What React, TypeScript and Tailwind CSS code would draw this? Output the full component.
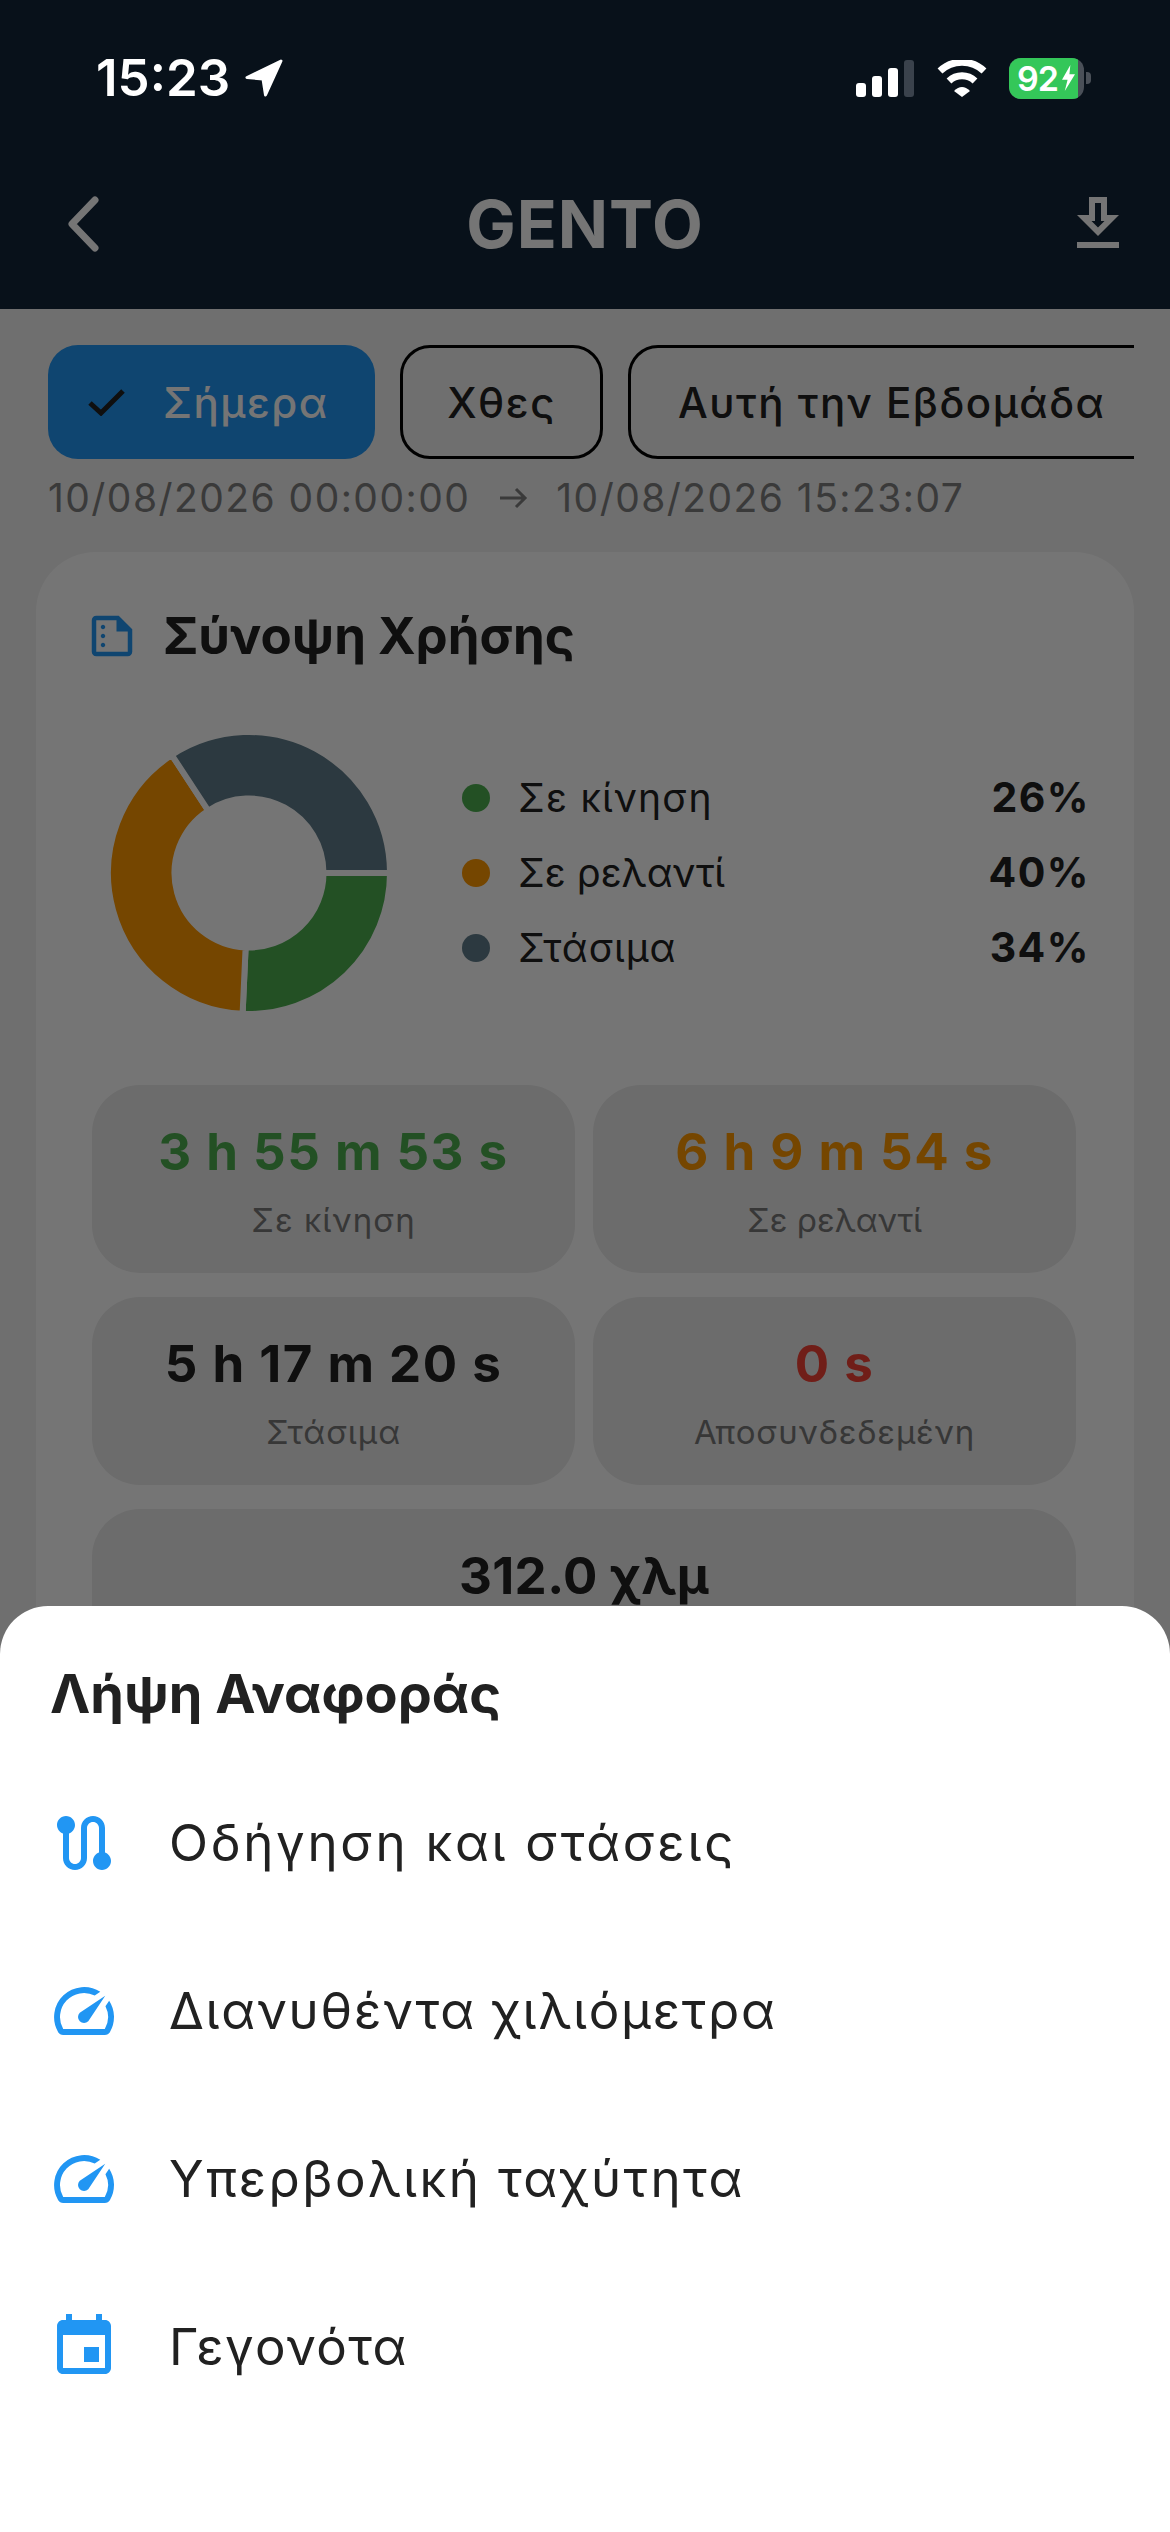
const ring = (from: number, to: number) => {
  const cx = 144
  const cy = 144
  const outer = 141
  const inner = 74.5
  const p = (r: number, a: number) => {
    const t = (a * Math.PI) / 180
    return `${(cx + r * Math.cos(t)).toFixed(2)} ${(cy + r * Math.sin(t)).toFixed(2)}`
  }
  const large = to - from > 180 ? 1 : 0
  return `M${p(outer, from)} A${outer} ${outer} 0 ${large} 1 ${p(outer, to)} L${p(inner, to)} A${inner} ${inner} 0 ${large} 0 ${p(inner, from)} Z`
}

const speedIcon = (
  <svg viewBox="0 0 24 24" className="w-[72px] h-[72px] shrink-0 fill-[#2196f3]">
    <path d="m20.38 8.57-1.23 1.85a8 8 0 0 1-.22 7.58H5.07A8 8 0 0 1 15.58 6.85l1.85-1.23A10 10 0 0 0 3.35 19a2 2 0 0 0 1.72 1h13.85a2 2 0 0 0 1.74-1 10 10 0 0 0-.27-10.44z" />
    <path d="M10.59 15.41a2 2 0 0 0 2.83 0l5.66-8.49-8.49 5.66a2 2 0 0 0 0 2.83z" />
  </svg>
)

const routeIcon = (
  <svg viewBox="0 0 24 24" className="w-[72px] h-[72px] shrink-0 fill-[#2196f3]">
    <path d="M19 15.18V7c0-2.21-1.79-4-4-4s-4 1.79-4 4v10c0 1.1-.9 2-2 2s-2-.9-2-2V8.82C8.16 8.4 9 7.3 9 6c0-1.66-1.34-3-3-3S3 4.34 3 6c0 1.3.84 2.4 2 2.82V17c0 2.21 1.79 4 4 4s4-1.79 4-4V7c0-1.1.9-2 2-2s2 .9 2 2v8.18c-1.16.41-2 1.51-2 2.82 0 1.66 1.34 3 3 3s3-1.34 3-3c0-1.3-.84-2.4-2-2.82z" />
  </svg>
)

const eventIcon = (
  <svg viewBox="0 0 24 24" className="w-[72px] h-[72px] shrink-0 fill-[#2196f3]">
    <path d="M17 12h-5v5h5v-5zM16 1v2H8V1H6v2H5c-1.11 0-1.99.9-1.99 2L3 19c0 1.1.89 2 2 2h14c1.1 0 2-.9 2-2V5c0-1.1-.9-2-2-2h-1V1h-2zm3 18H5V8h14v11z" />
  </svg>
)

const legend = [
  { label: 'Σε κίνηση', value: '26%', dot: 'bg-[#4caf50]', track: 'tracking-[1.2px]' },
  { label: 'Σε ρελαντί', value: '40%', dot: 'bg-[#ff9800]', track: 'tracking-[0px]' },
  { label: 'Στάσιμα', value: '34%', dot: 'bg-[#607d8b]', track: 'tracking-[1px]' },
]

const stats = [
  { value: '3 h 55 m 53 s', label: 'Σε κίνηση', color: 'text-[#4caf50]', track: 'tracking-[1px]' },
  { value: '6 h 9 m 54 s', label: 'Σε ρελαντί', color: 'text-[#ff9800]', track: 'tracking-[0px]' },
  { value: '5 h 17 m 20 s', label: 'Στάσιμα', color: 'text-[#212121]', track: 'tracking-[1px]' },
  { value: '0 s', label: 'Αποσυνδεδεμένη', color: 'text-[#f44336]', track: 'tracking-[0.8px]' },
]

const reports = [
  { label: 'Οδήγηση και στάσεις', icon: routeIcon, track: 'tracking-[2.7px]' },
  { label: 'Διανυθέντα χιλιόμετρα', icon: speedIcon, track: 'tracking-[1.75px]' },
  { label: 'Υπερβολική ταχύτητα', icon: speedIcon, track: 'tracking-[2.4px]' },
  { label: 'Γεγονότα', icon: eventIcon, track: 'tracking-[1.4px]' },
]

function StatusBar() {
  return (
    <div className="relative z-20 h-[156px] flex items-center justify-between pl-[96px] pr-[79px] text-white">
      <div className="flex items-center gap-[15px]">
        <span className="text-[51px] leading-[60px] font-semibold">15:23</span>
        <svg viewBox="0 0 38 38" className="w-[38px] h-[38px] fill-white stroke-white stroke-[3px]" strokeLinejoin="round">
          <path d="M36 2 L2 18.5 L18 20 L20.5 36 Z" />
        </svg>
      </div>
      <div className="flex items-center">
        <div className="flex items-end gap-[6px] h-[37px]">
          <div className="w-[10px] h-[14px] rounded-[3px] bg-white" />
          <div className="w-[10px] h-[21px] rounded-[3px] bg-white" />
          <div className="w-[10px] h-[29px] rounded-[3px] bg-white" />
          <div className="w-[10px] h-[37px] rounded-[3px] bg-[#3a424c]" />
        </div>
        <svg viewBox="0 0 50 37" className="w-[50px] h-[37px] ml-[23px] fill-none stroke-white stroke-[7px]">
          <path d="M3 11 A32 32 0 0 1 47 11" />
          <path d="M12 21 A19 19 0 0 1 38 21" />
          <path d="M17 31 Q25 23 33 31 L25 37 Z" className="fill-white stroke-none" />
        </svg>
        <div className="ml-[22px] w-[75px] h-[41px] rounded-[12px] overflow-hidden flex bg-[#4a5058]">
          <div className="w-[69px] h-full bg-[#34c759] flex items-center pl-[8px] gap-[4px]">
            <span className="text-[34px] leading-[41px] font-semibold tracking-[-1px]">92</span>
            <svg viewBox="0 0 14 28" className="w-[13px] h-[26px] fill-white shrink-0">
              <path d="M9 0 L0 16 H6 L3 28 L14 10 H8 Z" />
            </svg>
          </div>
        </div>
        <div className="ml-[2px] w-[5px] h-[12px] rounded-r-[4px] bg-[#4a5058]" />
      </div>
    </div>
  )
}

export default function App() {
  return (
    <div className="relative w-[1170px] h-[2532px] overflow-hidden bg-[#f2f2f2] font-['Inter','Noto_Sans',sans-serif]">
      <header className="bg-[#122539] pb-[17px]">
        <StatusBar />
        <div className="h-[136px] flex items-center justify-between px-[36px]">
          <svg viewBox="0 0 72 72" className="w-[72px] h-[72px] fill-none stroke-white stroke-[7px]" strokeLinecap="round" strokeLinejoin="round">
            <path d="M59 12 L36 36 L59 60" />
          </svg>
          <h1 className="text-[66px] leading-[76px] font-bold text-white tracking-[1px]">GENTO</h1>
          <svg viewBox="0 0 24 24" className="w-[72px] h-[72px] fill-white">
            <path d="M19 9h-4V3H9v6H5l7 7 7-7zm-8 2V5h2v6h1.17L12 13.17 9.83 11H11zm-6 7h14v2H5z" />
          </svg>
        </div>
      </header>

      <main>
        <div className="mt-[36px] ml-[48px] w-[1086px] h-[114px] flex gap-[25px] overflow-hidden text-[42px] font-medium text-[#212121] tracking-[1.5px]">
          <div className="w-[327px] shrink-0 rounded-[30px] bg-[#2196f3] flex items-center pl-[40px]">
            <svg viewBox="0 0 37 27" className="w-[37px] h-[27px] fill-none stroke-[#212121] stroke-[5px]">
              <path d="M2 14 L13 24 L35 2" />
            </svg>
            <span className="ml-[38px] text-white">Σήμερα</span>
          </div>
          <div className="w-[203px] shrink-0 rounded-[30px] border-[3px] border-black flex items-center justify-center">
            Χθες
          </div>
          <div className="w-[540px] shrink-0 rounded-[30px] border-[3px] border-black flex items-center pl-[47px] whitespace-nowrap">
            Αυτή την Εβδομάδα
          </div>
        </div>

        <div className="mt-[15px] ml-[48px] h-[48px] flex items-center text-[39px] leading-[48px] text-[#7e7e7e] tracking-[1.45px] whitespace-nowrap">
          <span>10/08/2026 00:00:00</span>
          <svg viewBox="0 0 30 24" className="w-[30px] h-[24px] ml-[28px] mr-[28px] fill-none stroke-[#7e7e7e] stroke-[3px]">
            <path d="M2 12 H27 M18 3 L27 12 L18 21" />
          </svg>
          <span>10/08/2026 15:23:07</span>
        </div>

        <section className="mt-[30px] mx-[36px] h-[1300px] rounded-[60px] bg-white pt-[48px]">
          <div className="h-[72px] flex items-center pl-[49px]">
            <svg viewBox="0 0 24 24" className="w-[54px] h-[54px] fill-[#2196f3] shrink-0">
              <path d="M15 3H5c-1.1 0-1.99.9-1.99 2L3 19c0 1.1.89 2 2 2h14c1.1 0 2-.9 2-2V9l-6-6zM5 19V5h9v5h5v9H5zM9 8c0 .55-.45 1-1 1s-1-.45-1-1 .45-1 1-1 1 .45 1 1zm0 4c0 .55-.45 1-1 1s-1-.45-1-1 .45-1 1-1 1 .45 1 1zm0 4c0 .55-.45 1-1 1s-1-.45-1-1 .45-1 1-1 1 .45 1 1z" />
            </svg>
            <h2 className="ml-[24px] text-[51px] font-bold text-[#212121]">Σύνοψη Χρήσης</h2>
          </div>

          <div className="mt-[57px] pl-[69px] pr-[44px] flex items-center">
            <svg viewBox="0 0 288 288" className="w-[288px] h-[288px] shrink-0">
              <path d={ring(0, 92.6)} fill="#4caf50" stroke="#fff" strokeWidth="6" />
              <path d={ring(92.6, 236.8)} fill="#ff9800" stroke="#fff" strokeWidth="6" />
              <path d={ring(236.8, 360)} fill="#607d8b" stroke="#fff" strokeWidth="6" />
            </svg>
            <div className="ml-[69px] flex-1">
              {legend.map((row) => (
                <div key={row.label} className="h-[75px] flex items-center">
                  <div className={`w-[28px] h-[28px] rounded-full ${row.dot}`} />
                  <span className={`ml-[28px] flex-1 text-[39px] text-[#212121] ${row.track}`}>{row.label}</span>
                  <span className="text-[41px] font-bold text-[#212121] tracking-[1.5px]">{row.value}</span>
                </div>
              ))}
            </div>
          </div>

          <div className="mt-[68px] ml-[56px] mr-[58px] grid grid-cols-2 gap-x-[18px] gap-y-[24px]">
            {stats.map((s) => (
              <div key={s.label} className="h-[188px] rounded-[48px] bg-[#ebebeb] pt-[37px] flex flex-col items-center">
                <div className={`text-[51px] leading-[60px] font-bold tracking-[1.5px] ${s.color}`}>{s.value}</div>
                <div className={`mt-[17px] text-[33px] leading-[42px] text-[#787878] ${s.track}`}>{s.label}</div>
              </div>
            ))}
            <div className="col-span-2 h-[188px] rounded-[48px] bg-[#ebebeb] pt-[37px] flex flex-col items-center">
              <div className="text-[51px] leading-[60px] font-bold tracking-[0.4px] text-[#212121]">312.0 χλμ</div>
            </div>
          </div>
        </section>
      </main>

      <div className="absolute inset-0 z-10 bg-black/[0.54]" />

      <div className="absolute inset-x-0 bottom-0 z-20 h-[926px] rounded-t-[48px] bg-white">
        <h3 className="mt-[52px] ml-[50px] text-[54px] leading-[72px] font-bold text-[#212121]">Λήψη Αναφοράς</h3>
        <div className="mt-[29px]">
          {reports.map((r) => (
            <div key={r.label} className="h-[168px] flex items-center pl-[48px]">
              {r.icon}
              <span className={`ml-[49px] text-[51px] text-[#212121] ${r.track}`}>{r.label}</span>
            </div>
          ))}
        </div>
      </div>
    </div>
  )
}
